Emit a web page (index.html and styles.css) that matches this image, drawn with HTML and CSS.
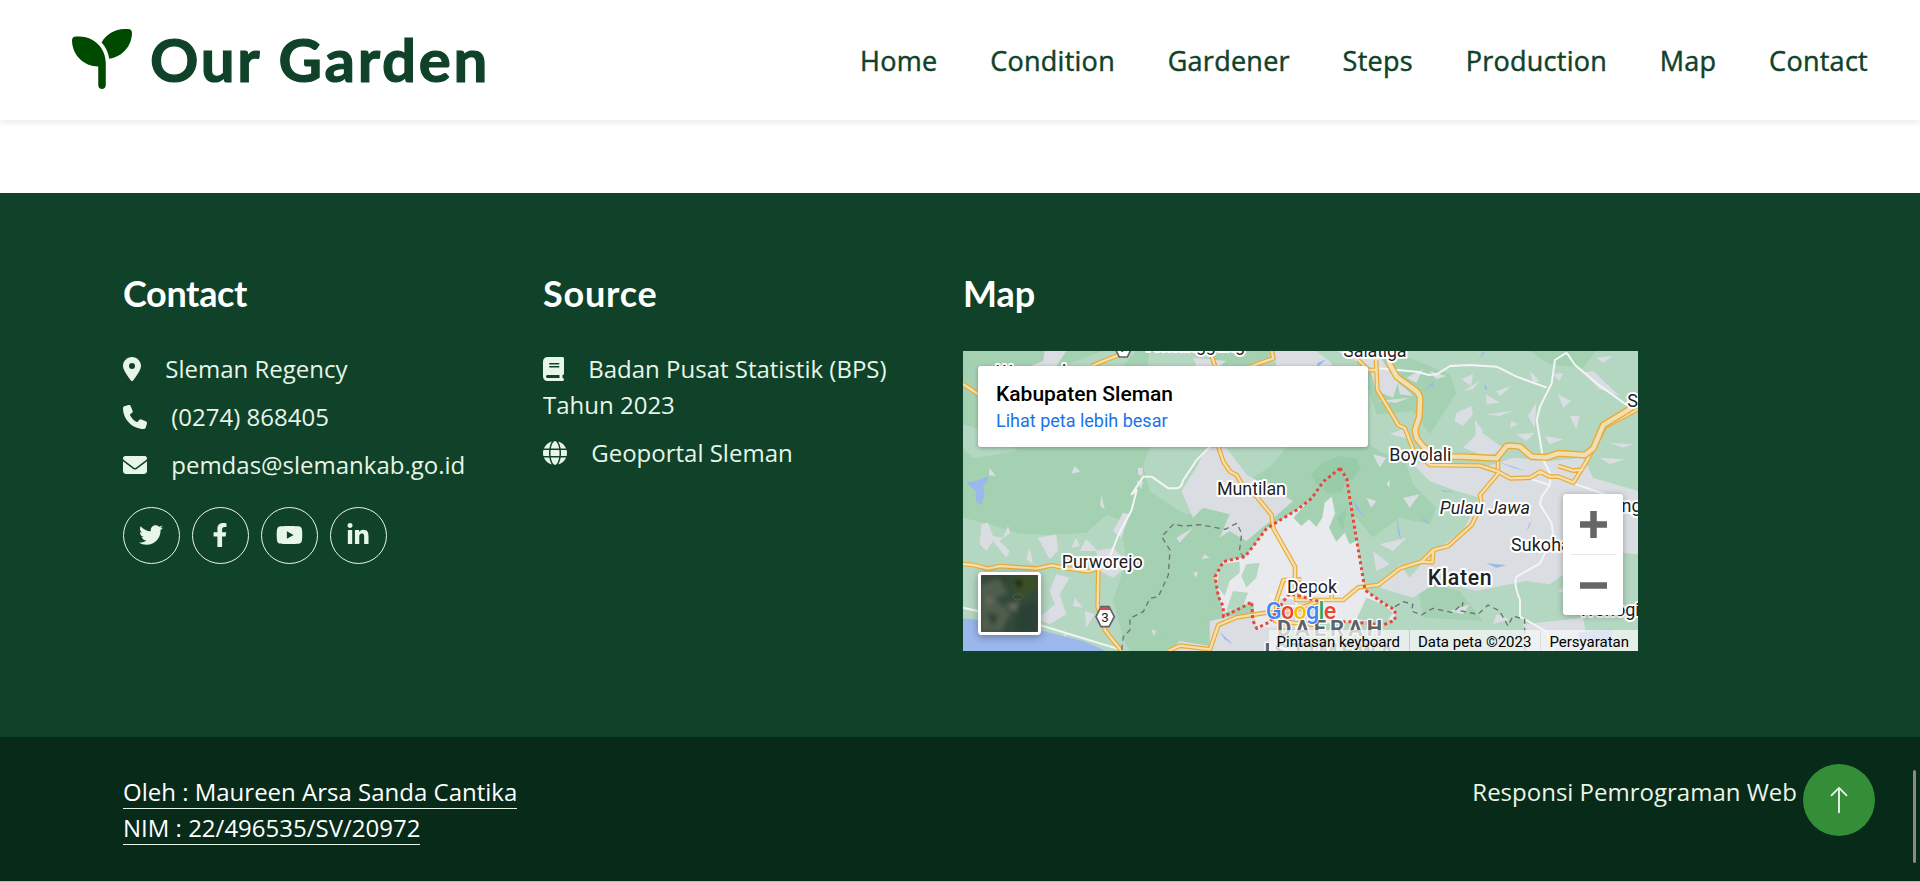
FILE: index.html
```html
<!DOCTYPE html>
<html lang="id">
<head>
<meta charset="utf-8">
<title>Our Garden</title>
<link rel="stylesheet" href="styles.css">
</head>
<body>
<header class="navbar">
  <a class="brand">
    <svg class="brand-icon" viewBox="0 0 512 512"><path d="M512 32c0 113.6-84.6 207.5-194.2 222c-7.1-53.4-30.6-101.6-65.3-139.3C290.8 46.3 364 0 448 0h32c17.7 0 32 14.3 32 32zM0 96C0 78.3 14.3 64 32 64H64c123.7 0 224 100.3 224 224v32V480c0 17.7-14.3 32-32 32s-32-14.3-32-32V320C100.3 320 0 219.7 0 96z"/></svg>
    <span class="brand-name">Our Garden</span>
  </a>
  <nav class="menu"><a>Home</a><a>Condition</a><a>Gardener</a><a>Steps</a><a>Production</a><a>Map</a><a>Contact</a></nav>
</header>

<footer class="footer">
  <section>
    <h4 class="heading contact-title">Contact</h4>
    <p class="line"><svg class="icon narrow" viewBox="0 0 384 512"><path d="M215.7 499.2C267 435 384 279.4 384 192C384 86 298 0 192 0S0 86 0 192c0 87.4 117 243 168.3 307.2c12.3 15.3 35.1 15.3 47.4 0zM192 128a64 64 0 1 1 0 128 64 64 0 1 1 0-128z"/></svg> Sleman Regency</p>
    <p class="line"><svg class="icon" viewBox="0 0 512 512"><path d="M164.9 24.6c-7.7-18.6-28-28.5-47.4-23.2l-88 24C12.1 30.2 0 46 0 64C0 311.4 200.6 512 448 512c18 0 33.8-12.1 38.6-29.5l24-88c5.3-19.4-4.6-39.7-23.2-47.4l-96-40c-16.3-6.8-35.2-2.1-46.3 11.6L304.7 368C234.3 334.7 177.3 277.7 144 207.3L193.3 167c13.7-11.2 18.4-30 11.6-46.3l-40-96z"/></svg> (0274) 868405</p>
    <p class="line"><svg class="icon" viewBox="0 0 512 512"><path d="M48 64C21.5 64 0 85.5 0 112c0 15.1 7.1 29.3 19.2 38.4L236.8 313.600c11.400 8.500 27 8.500 38.400 0L492.800 150.400c12.100-9.100 19.200-23.300 19.200-38.400c0-26.500-21.500-48-48-48H48zM0 176V384c0 35.300 28.700 64 64 64H448c35.300 0 64-28.700 64-64V176L294.400 339.200c-22.800 17.100-54 17.100-76.800 0L0 176z"/></svg> pemdas@slemankab.go.id</p>
    <div class="social">
      <a><svg class="icon" viewBox="0 0 512 512"><path d="M459.370 151.716c.325 4.548.325 9.097.325 13.645 0 138.720-105.583 298.558-298.558 298.558-59.452 0-114.680-17.219-161.137-47.106 8.447.974 16.568 1.299 25.340 1.299 49.055 0 94.213-16.568 130.274-44.832-46.132-.975-84.792-31.188-98.112-72.772 6.498.974 12.995 1.624 19.818 1.624 9.421 0 18.843-1.300 27.614-3.573-48.081-9.747-84.143-51.980-84.143-102.985v-1.299c13.969 7.797 30.214 12.670 47.431 13.319-28.264-18.843-46.781-51.005-46.781-87.391 0-19.492 5.197-37.360 14.294-52.954 51.655 63.675 129.300 105.258 216.365 109.807-1.624-7.797-2.599-15.918-2.599-24.040 0-57.828 46.782-104.934 104.934-104.934 30.213 0 57.502 12.670 76.670 33.137 23.715-4.548 46.456-13.320 66.599-25.340-7.798 24.366-24.366 44.833-46.132 57.827 21.117-2.273 41.584-8.122 60.426-16.243-14.292 20.791-32.161 39.308-52.628 54.253z"/></svg></a>
      <a><svg class="icon" viewBox="-96 0 512 512"><path d="M279.140 288l14.220-92.660h-88.910v-60.130c0-25.350 12.420-50.060 52.240-50.060h40.420V6.260S260.430 0 225.360 0c-73.220 0-121.080 44.380-121.080 124.720v70.620H22.890V288h81.390v224h100.170V288z"/></svg></a>
      <a><svg class="icon wide" viewBox="0 0 576 512"><path d="M549.655 124.083c-6.281-23.650-24.787-42.276-48.284-48.597C458.781 64 288 64 288 64S117.220 64 74.629 75.486c-23.497 6.322-42.003 24.947-48.284 48.597-11.412 42.867-11.412 132.305-11.412 132.305s0 89.438 11.412 132.305c6.281 23.650 24.787 41.500 48.284 47.821C117.220 448 288 448 288 448s170.780 0 213.371-11.486c23.497-6.321 42.003-24.171 48.284-47.821 11.412-42.867 11.412-132.305 11.412-132.305s0-89.438-11.412-132.305zm-317.510 213.508V175.185l142.739 81.205-142.739 81.201z"/></svg></a>
      <a><svg class="icon" viewBox="-32 0 512 512"><path d="M100.280 448H7.400V148.900h92.880zM53.790 108.100C24.090 108.100 0 83.500 0 53.800a53.790 53.790 0 0 1 107.580 0c0 29.700-24.100 54.300-53.790 54.300zM447.900 448h-92.680V302.400c0-34.700-.7-79.200-48.290-79.200-48.290 0-55.690 37.700-55.690 76.700V448h-92.780V148.900h89.080v40.800h1.300c12.400-23.500 42.690-48.300 87.880-48.300 94 0 111.280 61.900 111.280 142.300V448z"/></svg></a>
    </div>
  </section>

  <section>
    <h4 class="heading source-title">Source</h4>
    <p class="line"><svg class="icon book" viewBox="0 0 448 512"><path d="M96 0C43 0 0 43 0 96V416c0 53 43 96 96 96H384h32c17.700 0 32-14.300 32-32s-14.300-32-32-32V384c17.700 0 32-14.300 32-32V32c0-17.700-14.300-32-32-32H384 96zm0 384H352v64H96c-17.700 0-32-14.300-32-32s14.300-32 32-32zm32-240c0-8.800 7.200-16 16-16H336c8.800 0 16 7.200 16 16s-7.200 16-16 16H144c-8.800 0-16-7.200-16-16zm16 48H336c8.800 0 16 7.200 16 16s-7.200 16-16 16H144c-8.800 0-16-7.200-16-16s7.200-16 16-16z"/></svg> Badan Pusat Statistik (BPS) Tahun 2023</p>
    <p class="line"><svg class="icon" viewBox="0 0 512 512"><path d="M352 256c0 22.200-1.200 43.600-3.300 64H163.300c-2.200-20.400-3.300-41.800-3.300-64s1.200-43.600 3.300-64H348.700c2.200 20.400 3.300 41.800 3.300 64zm28.800-64H503.900c5.300 20.500 8.100 41.900 8.100 64s-2.800 43.500-8.100 64H380.800c2.100-20.600 3.200-42 3.200-64s-1.100-43.400-3.200-64zm112.600-32H376.700c-10-63.900-29.800-117.400-55.300-151.600c78.300 20.700 142 77.500 171.900 151.600zm-149.100 0H167.700c6.100-36.400 15.500-68.600 27-94.700c10.500-23.600 22.200-40.700 33.500-51.500C239.400 3.200 248.700 0 256 0s16.600 3.200 27.800 13.800c11.300 10.800 23 27.900 33.500 51.500c11.600 26 20.900 58.200 27 94.700zm-209 0H18.600C48.600 85.900 112.200 29.100 190.600 8.400C165.100 42.600 145.300 96.100 135.300 160zM8.100 192H131.200c-2.100 20.600-3.200 42-3.200 64s1.100 43.400 3.200 64H8.100C2.800 299.500 0 278.100 0 256s2.800-43.500 8.100-64zM194.700 446.600c-11.600-26-20.900-58.200-27-94.600H344.300c-6.100 36.400-15.500 68.600-27 94.600c-10.500 23.600-22.200 40.700-33.500 51.500C272.600 508.800 263.300 512 256 512s-16.600-3.200-27.800-13.800c-11.300-10.800-23-27.900-33.500-51.500zM135.300 352c10 63.900 29.800 117.400 55.300 151.600C112.200 482.900 48.600 426.100 18.600 352H135.300zm358.100 0c-30 74.100-93.600 130.900-171.900 151.600c25.500-34.200 45.200-87.700 55.300-151.600H493.400z"/></svg> Geoportal Sleman</p>
  </section>

  <section>
    <h4 class="heading map-title">Map</h4>
    <div class="map">
      <svg class="map-canvas" viewBox="0 0 2025 900">
        <defs>
          <path id="major" d="M1276 32L1301 77L1356 117Q1372 130 1371 147L1369 197L1356 237L1361 262L1381 287L1421 317H1496L1601 322L1630 286Q1636 282 1671 287L1706 317L1751 319L1786 307L1866 312L1891 292L1921 222L1971 192L2030 155"/>
          <path id="minor" d="M0 639L31 642L76 653L111 645L221 653L266 643L306 651L376 661L406 652L404 767L426 837L441 857L476 900M616 900L651 884L741 895L766 822L821 799L911 785L990 780L1076 747H1141L1186 709L1246 702L1311 652L1376 632L1411 597L1456 585L1526 522L1556 457L1551 432L1606 367M1376 632L1408 634L1411 597M766 287L781 332L801 362L821 372L841 407L881 437L926 492L931 532L996 647V710L1000 747H1076M1015 685L961 687L941 747L936 810L1060 822M0 99L46 130M386 45L441 22L481 7M741 0L756 45M926 0L931 22L861 47M1239 27L1243 117L1306 222L1326 232L1351 297L1401 342L1551 344L1606 362L1641 382L1701 380L1731 362L1761 377H1786L1831 395L1870 332L1926 227L2030 172M1186 27L1216 57H1241M1786 345L1831 359L1861 355M1605 325V355M1106 747V715"/>
        </defs>
        <rect class="forest" width="2025" height="900"/>
        <path class="field" d="M0 500L80 520L170 548L260 552L370 545L430 492L470 507L490 620L470 690L450 745L480 860L500 900H0ZM560 0H1110V287H970L930 340L840 400L770 470L700 500L650 480L560 420L540 340L575 260L540 120ZM1110 0H2025V900H1080L960 720L1010 560L1140 480L1180 330L1120 230ZM420 0L520 0L480 45H300ZM0 220L90 245L165 300L30 322L0 290Z"/>
        <path class="forest" d="M1110 210L1250 300L1330 340L1350 400L1420 470L1400 520L1310 500L1230 560L1170 490L1080 500L900 620L840 640L770 700L700 830L580 870L540 750L600 560L690 480L900 430L990 340ZM1290 0L1460 70L1480 125L1440 190L1400 250L1350 180L1240 190L1200 60ZM1700 0L1900 0L1860 50L1760 40ZM760 0L930 0L860 90L740 60ZM1360 690L1490 720L1560 810L1380 800Z"/>
        <path class="mount" d="M1045 370L1080 335L1130 315L1180 322L1192 350L1170 385L1120 400L1060 400Z"/>
        <path class="town" d="M655 420L700 350L730 290H790L850 370L990 450L910 520L850 570L800 540L770 560L800 490L720 470L690 500ZM1340 330L1420 345L1560 350L1650 320L1760 330L1860 320L1890 380L2025 420V610L1900 600L1760 700L1690 690L1540 720L1430 690L1350 740L1250 710L1310 640L1340 680L1400 610L1500 540L1550 440L1480 420L1400 390ZM245 0H310L270 60L210 70L190 50L240 30ZM690 20L790 30L770 45H700ZM935 0H1060L1110 40L1060 60L940 50ZM1120 0H1240L1280 60L1310 80L1290 140L1240 120L1220 50ZM740 810L830 790L920 800L1000 900H620L650 870L740 885ZM400 600L450 590L500 640L450 680L410 660ZM1550 240L1620 290L1580 320L1500 290ZM1680 820L1860 800L1880 900H1700Z"/>
        <path class="town" d="M55 520L75 515L90 555L120 560L135 525L142 545L110 570L140 600L130 620L90 570L70 600L50 580ZM225 560L280 550L285 600L260 625ZM200 590L210 640L190 625ZM340 560L350 585L325 590ZM370 565L405 600L350 600ZM80 350L98 375L78 372ZM335 345L352 362L325 368ZM525 350L540 350L538 375L525 370ZM520 390L540 392L535 415ZM415 430L425 475L412 465ZM480 485L500 490L475 560L450 540ZM280 670L320 680L290 730L310 790L260 820L225 805L275 760L260 720ZM60 740L80 710L100 715L80 745ZM205 700L220 660L230 690L214 725ZM335 740L360 770L330 765ZM365 780L395 790L370 830ZM300 845L315 850L305 860ZM565 835L580 840L572 855ZM640 560L690 530L650 575ZM690 665L705 662L700 680ZM725 610L740 620L715 625ZM1305 95L1330 115L1350 135L1310 130ZM1240 150L1340 140L1300 155ZM1380 55L1360 95L1330 80ZM1495 85L1530 70L1525 105ZM1570 130L1610 155L1570 160ZM1600 120L1645 105L1610 135ZM1570 190L1650 180L1610 195ZM1480 185L1525 165L1530 190L1500 225L1475 210ZM1535 205L1560 240L1540 270ZM1695 195L1720 155L1715 230ZM1770 70L1800 65L1790 90ZM1860 65L1890 60L1970 135L1910 115ZM1820 195L1850 195L1840 235ZM1940 275L2010 280L1980 290ZM1910 320L1985 325L1940 340ZM1645 210L1665 220L1640 230ZM1745 255L1800 265L1760 280ZM1660 250L1715 245L1690 270ZM1280 250L1340 265L1320 235ZM1230 310L1270 320L1250 350ZM1270 400L1280 385L1280 410ZM1210 440L1240 450L1225 470ZM1320 440L1370 430L1340 470ZM1250 580L1330 560L1290 600ZM1230 600L1280 640L1240 660ZM1400 60L1450 75L1420 85ZM1500 120L1550 90L1530 115ZM1700 60L1730 90L1710 95ZM1900 20L1950 15L1920 35ZM1570 690L1620 680L1600 710ZM1460 780L1520 760L1500 790ZM1600 790L1640 805L1590 820ZM1790 610L1840 600L1820 640ZM1785 720L1830 690L1840 740ZM1800 170L1785 130L1825 150Z"/>
        <path class="urban" d="M846 617L881 572L911 532L1001 477L1046 442L1081 392L1131 352L1151 382L1161 447L1176 537L1206 717L1261 757L1296 777V807L1161 812L881 832L869 752L781 787L756 677L781 632Z"/>
        <path class="forest" d="M991 500L1031 457L1081 392L1131 352L1155 395L1162 450L1180 570L1160 580L1145 545L1120 572L1098 530L1116 487L1106 437L1085 455L1078 500L1060 528L1038 505L1015 525Z"/>
        <path class="mount" d="M1095 375L1131 352L1150 385L1135 420L1100 430L1080 415ZM1120 500L1140 540L1150 470Z"/>
        <path class="field" d="M770 640L830 632L830 665L800 690L785 735L762 705ZM850 640L890 635L880 680L850 710L835 675ZM810 720L855 725L840 765L790 780ZM1210 740L1260 760L1290 785L1270 815L1180 805Z"/>
        <path class="city" d="M955 735H1050L1085 790L1060 840L940 830Z"/>
        <path class="water" d="M0 802L160 820L360 870L430 900H0ZM10 395L40 390L75 375V390L60 405L65 430L55 460L40 455L38 420ZM1090 25L1060 52L1065 35ZM1565 5L1545 28L1560 3ZM1392 110L1412 90L1410 105ZM1565 95L1573 115L1565 117ZM1600 330L1690 360L1650 350ZM1435 417L1480 424L1440 422ZM1170 445L1205 500L1180 475ZM1300 490L1315 570L1305 545ZM1365 485L1400 518L1385 510ZM1570 637L1630 643L1600 650ZM1690 540L1703 510L1700 525ZM1845 845L1945 835V880L1850 865ZM770 842L810 880L785 865Z"/>
        <path class="lane" d="M0 770L230 822L470 895M741 287L701 327L661 387Q655 412 641 412L616 412L566 377L541 377L506 430L521 417L506 477L466 552L441 617M1246 52L1361 62L1398 72L1421 70L1461 45L1521 42L1601 47L1661 77L1751 110M1811 5L1776 27L1766 97L1731 167L1721 207L1741 327L1761 367V402L1736 437L1731 460L1766 517L1771 557L1731 637L1661 677Q1650 695 1671 747V797L1751 842L1770 900M1811 5L1836 42L1901 97L1991 162M1831 397L1931 432M1691 380L1761 402M920 735L1060 750M940 765H1060M1000 740V840M1035 740V840"/>
        <use class="minor-edge" href="#minor"/><use class="minor-fill" href="#minor"/>
        <use class="major-edge" href="#major"/><use class="major-fill" href="#major"/>
        <path class="boundary" d="M476 897L481 857L501 837V802L541 782L561 742L586 737L616 672L621 597L596 557L631 520L661 525L711 521L786 535L821 517L836 547L829 602L846 622M1296 767L1320 752L1350 760L1345 780L1375 792L1410 772L1470 785L1500 755L1495 780L1545 790L1575 762L1610 780L1635 825L1650 795L1685 805V900"/>
        <path class="region-line" d="M1131 352L1081 392L1046 442L1001 477L911 532L881 572L846 617L781 632L756 677L766 737L781 767V797L841 767L866 752L869 807L881 832L921 812L971 737L981 727L1071 752M1131 352L1151 382L1161 447L1176 537L1206 717L1261 757L1296 777V807L1261 822L1161 812L1101 812"/>
        <g class="labels">
          <text x="100" y="82">Wonosobo</text>
          <text x="539" y="1" textLength="307">Temanggung</text>
          <text x="1141" y="19" textLength="190">Salatiga</text>
          <text x="1279" y="330" textLength="186">Boyolali</text>
          <text x="1993" y="167">Surakarta</text>
          <text x="762" y="433" textLength="207">Muntilan</text>
          <text x="296" y="651" textLength="243">Purworejo</text>
          <text x="972" y="727" textLength="150">Depok</text>
          <text class="italic" x="1430" y="490" textLength="271">Pulau Jawa</text>
          <text class="large" x="1394" y="701" textLength="192">Klaten</text>
          <text x="1644" y="600" textLength="242">Sukoharjo</text>
          <text x="1866" y="482">Karanganyar</text>
          <text x="1848" y="795">Wonogiri</text>
          <text class="province" x="942" y="854" textLength="316">DAERAH</text>
          <text class="province" x="904" y="923" textLength="390">ISTIMEWA</text>
        </g>
        <g class="shield"><path d="M414 767H438L454 797L438 827H414L399 797Z"/><path class="shield-top" d="M414 768H438L443 777H409Z"/><text x="426" y="812">3</text></g>
        <g class="shield"><path d="M469 -42H493L508 -12L493 18H469L454 -12Z"/><text x="481" y="2">7</text></g>
        <text class="google" x="908" y="804" textLength="212"><tspan class="g-blue">G</tspan><tspan class="g-red">o</tspan><tspan class="g-yellow">o</tspan><tspan class="g-blue">g</tspan><tspan class="g-green">l</tspan><tspan class="g-red">e</tspan></text>
      </svg>
      <div class="place-card"><strong>Kabupaten Sleman</strong><a>Lihat peta lebih besar</a></div>
      <div class="satellite">
        <svg viewBox="0 0 57 57">
          <defs><filter id="soft"><feGaussianBlur stdDeviation="2.2"/></filter></defs>
          <rect width="57" height="57" fill="#34493a"/>
          <g filter="url(#soft)"><path d="M0 10L18 3L26 18L14 24L30 38L20 57H0Z" fill="#505d4d"/><path d="M4 20L13 25L8 32ZM24 30L38 27L34 37Z" fill="#6a6c5d"/><path d="M35 0H57V12L42 22L32 14Z" fill="#3a5028"/><path d="M33 4L42 6L38 15Z" fill="#152b0d"/><path d="M38 30L57 25V57H32Z" fill="#2c4236"/><path d="M13 0L28 0L25 9ZM6 38L17 40L12 52Z" fill="#2d422f"/></g>
          <ellipse cx="37" cy="22" rx="5" ry="3" fill="none" stroke="#57684f" opacity=".7"/>
        </svg>
      </div>
      <div class="zoom"><svg viewBox="0 0 60 121"><path class="zoom-sign" d="M17 30.500H44M30.500 17V44M17 91.500H44"/><path class="zoom-rule" d="M8 60.500H53"/></svg></div>
      <div class="credits"><span>Pintasan keyboard</span><span>Data peta ©2023</span><span>Persyaratan</span></div>
    </div>
  </section>
</footer>

<div class="copyright">
  <div><a>Oleh : Maureen Arsa Sanda Cantika</a><br><a>NIM : 22/496535/SV/20972</a></div>
  <div>Responsi Pemrograman Web</div>
</div>
<a class="to-top"><svg viewBox="0 0 16 16"><path fill-rule="evenodd" d="M8 15a.5.5 0 0 0 .5-.5V2.707l3.146 3.147a.5.5 0 0 0 .708-.708l-4-4a.5.5 0 0 0-.708 0l-4 4a.5.5 0 1 0 .708.708L7.500 2.707V14.500a.5.5 0 0 0 .5.5z"/></svg></a>
<div class="scroll-thumb"></div>
</body>
</html>
```

FILE: styles.css
```css
* { box-sizing: border-box; }
body {
  margin: 0;
  height: 882px;
  overflow: hidden;
  background: #fff;
  color: #e8f5e9;
  font: 24px/36px "Open Sans", "Noto Sans", sans-serif;
}
p, h4 { margin: 0; }
svg { display: block; }

.navbar {
  position: relative;
  display: flex;
  justify-content: space-between;
  align-items: center;
  height: 120px;
  padding: 0 52px 0 72px;
  background: #fff;
  box-shadow: 0 3px 6px rgba(0, 0, 0, .075);
}
.brand { display: flex; align-items: center; gap: 18px; }
.brand-icon { width: 60px; height: 60px; margin-top: -3px; fill: #004a00; }
.brand-name {
  margin-top: -2px;
  color: #0f4229;
  font: 700 60px/72px Lato, sans-serif;
  letter-spacing: 2.7px;
  white-space: nowrap;
  -webkit-text-stroke: 1.2px #0f4229;
}
.menu {
  display: flex;
  gap: 52.7px;
  margin-top: 1px;
  color: #0f4229;
  font-size: 27px;
  letter-spacing: .27px;
  -webkit-text-stroke: .45px #0f4229;
}

.footer {
  display: grid;
  grid-template-columns: 372px 372px 675px;
  column-gap: 48px;
  height: 544px;
  margin-top: 73px;
  padding: 79px 123px 0;
  background: #0f4229;
}
.heading { height: 79px; color: #fff; font: 700 36px/43px Lato, sans-serif; }
.contact-title { letter-spacing: -.35px; }
.source-title { letter-spacing: .8px; }
.line { margin-bottom: 12px; }
.icon { display: inline-block; width: 24px; height: 24px; margin-right: 18px; vertical-align: -3px; fill: currentColor; }
.icon.narrow { width: 18px; }
.icon.book { width: 21px; }
.icon.wide { width: 27px; }
.social { display: flex; gap: 12px; padding-top: 12px; }
.social a {
  display: flex;
  justify-content: center;
  align-items: center;
  width: 57px;
  height: 57px;
  border: 1px solid #e8f5e9;
  border-radius: 50%;
}
.social .icon { margin: 0 1px 2px 0; }

.map { position: relative; width: 675px; height: 300px; overflow: hidden; font-family: Roboto, sans-serif; }
.map-canvas { width: 675px; height: 300px; }
.forest { fill: #a5d1b3; }
.field { fill: #b4d7c1; }
.mount { fill: #98cba7; }
.town { fill: #dadde1; }
.urban { fill: #e8eaee; }
.city { fill: #d8dade; }
.water { fill: #9ab8ec; }
.lane, .minor-edge, .minor-fill, .major-edge, .major-fill, .boundary, .region-line { fill: none; stroke-linejoin: round; }
.lane { stroke: #f3f5f5; stroke-width: 6; }
.minor-edge { stroke: #e9aa34; stroke-width: 14; }
.minor-fill { stroke: #f4dfad; stroke-width: 7; }
.major-edge { stroke: #e9aa34; stroke-width: 21; }
.major-fill { stroke: #f1dfb4; stroke-width: 13; }
.boundary { stroke: #6b7475; stroke-width: 4; stroke-dasharray: 16 12; }
.region-line { stroke: #e8453c; stroke-width: 9; stroke-dasharray: 9 9; }
.labels text { fill: #202124; stroke: #fff; stroke-width: 12; stroke-linejoin: round; paint-order: stroke; font-size: 54px; }
.labels .italic { font-style: italic; }
.labels .large { font-size: 64px; font-weight: 500; }
.labels .province { fill: #5f6368; stroke-width: 8; font-size: 66px; font-weight: 700; }
.shield path { fill: #fff; stroke: #5f6368; stroke-width: 5; }
.shield .shield-top { fill: #d9484c; stroke: none; }
.shield text { fill: #202124; font-size: 40px; text-anchor: middle; }
.google { font: 500 70px Roboto, sans-serif; stroke: #fff; stroke-width: 5; paint-order: stroke; }
.g-blue { fill: #4285f4; }
.g-red { fill: #ea4335; }
.g-yellow { fill: #fbbc05; }
.g-green { fill: #34a853; }

.place-card {
  position: absolute;
  top: 15px;
  left: 15px;
  display: flex;
  flex-direction: column;
  width: 390px;
  height: 81px;
  padding: 15px 18px;
  border-radius: 3px;
  background: #fff;
  box-shadow: 0 1px 4px rgba(0, 0, 0, .3);
}
.place-card strong { color: #000; font-size: 21px; font-weight: 500; line-height: 26px; }
.place-card a { color: #1a73e8; font-size: 18px; line-height: 27px; }
.satellite {
  position: absolute;
  left: 15px;
  top: 221px;
  width: 63px;
  height: 63px;
  border: 3px solid #fff;
  border-radius: 4px;
  overflow: hidden;
  box-shadow: 0 2px 9px rgba(0, 0, 0, .35);
}
.zoom {
  position: absolute;
  left: 600px;
  top: 143px;
  width: 60px;
  height: 121px;
  border-radius: 3px;
  background: #fff;
  box-shadow: 0 1px 6px rgba(0, 0, 0, .3);
}
.zoom-sign { fill: none; stroke: #666; stroke-width: 6.500; }
.zoom-rule { stroke: #e6e6e6; }
.credits { position: absolute; right: 0; bottom: 0; display: flex; gap: 1px; color: #000; font-size: 15px; line-height: 21px; white-space: nowrap; }
.credits span { padding: 2px 9px 0 8px; height: 21px; background: rgba(245, 245, 245, .75); }

.copyright {
  display: flex;
  justify-content: space-between;
  height: 145px;
  padding: 37px 123px 0;
  border-bottom: 1px solid #b5bfa5;
  background: #082a19;
}
.copyright a { color: #fff; border-bottom: 1px solid #e8f5e9; }
.to-top {
  position: fixed;
  right: 45px;
  bottom: 46px;
  display: flex;
  justify-content: center;
  align-items: center;
  width: 72px;
  height: 72px;
  border-radius: 50%;
  background: #348e38;
}
.to-top svg { width: 30px; height: 30px; fill: #e8f5e9; }
.scroll-thumb { position: fixed; right: 4px; top: 770px; width: 3px; height: 93px; border-radius: 2px; background: #8a8a8a; }
```
